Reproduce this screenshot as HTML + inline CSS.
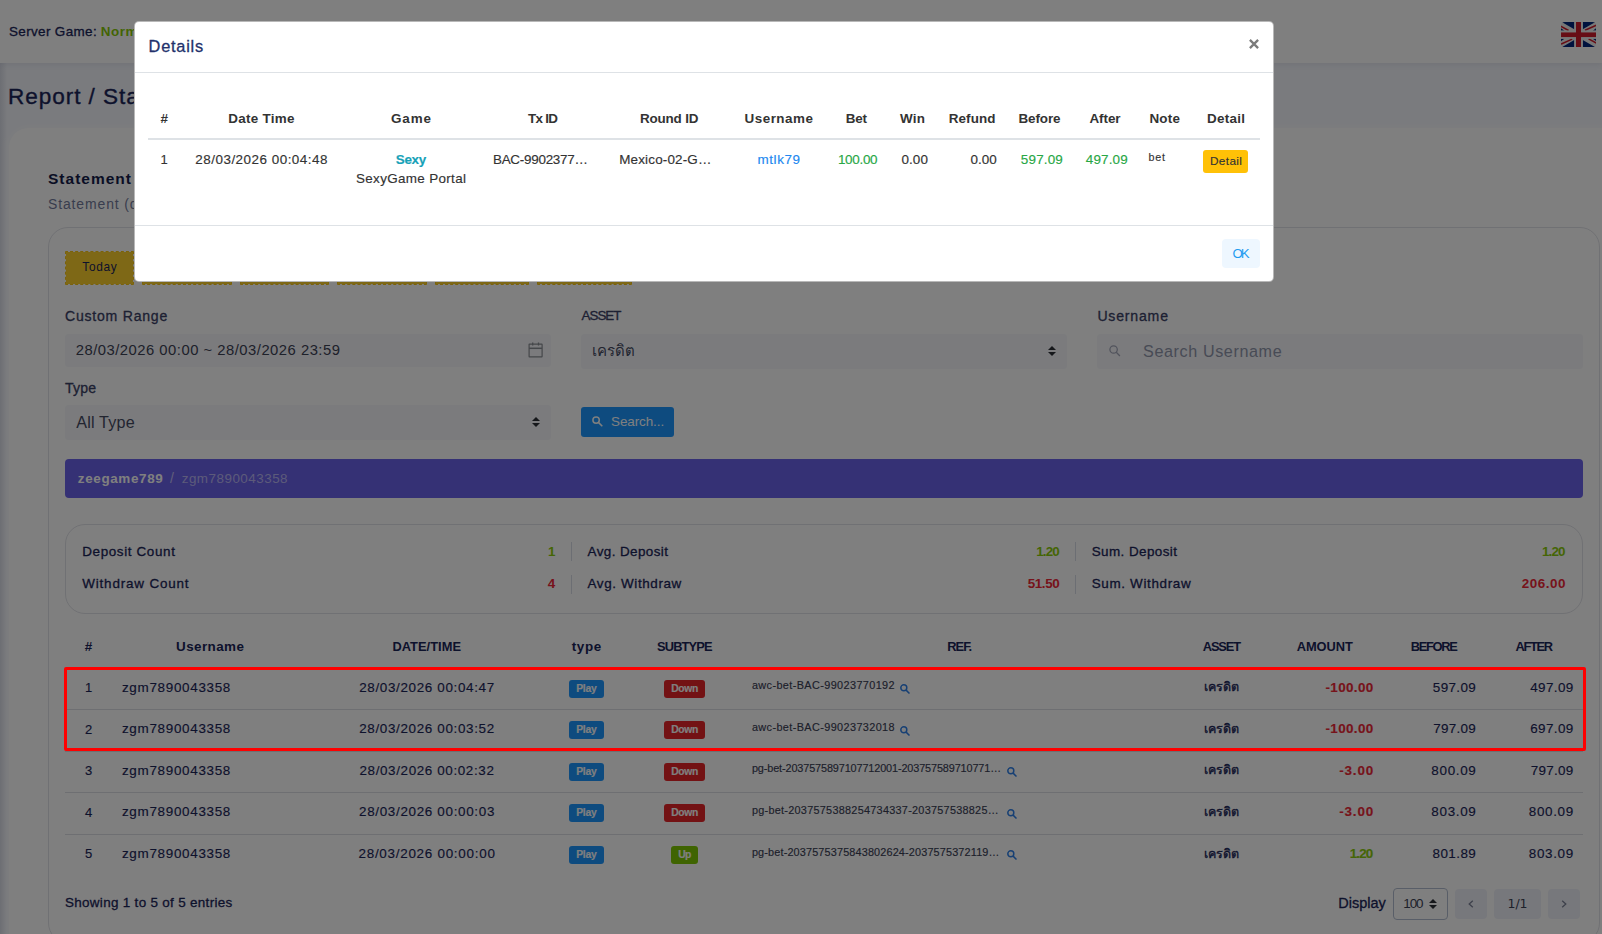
<!DOCTYPE html><html lang="en"><head><meta charset="utf-8"><title>Report / Statement</title><style>
*{box-sizing:border-box}
html,body{margin:0;padding:0}
body{width:1602px;height:934px;overflow:hidden;position:relative;background:#f4f6fc;
 font-family:"Liberation Sans","Noto Sans CJK SC",sans-serif;font-size:13px;line-height:1.5;color:#1b2559}
.abs{position:absolute}
.rb{position:absolute;width:0;height:0}
form{margin:0;padding:0}
.nw{white-space:nowrap}
#topbar{position:absolute;left:0;top:0;width:1602px;height:63px;background:#fff;box-shadow:0 1px 6px rgba(40,50,90,.10)}
#wrap{position:absolute;left:9px;top:128px;width:1640px;height:900px;background:#fff;border-radius:20px 0 0 0;box-shadow:0 0 7px 2px rgba(255,255,255,.55)}
#card{position:absolute;left:48px;top:227px;width:1552px;height:716px;border:1px solid #e1e2e8;border-radius:20px;background:#fff}
.qbtn{position:absolute;top:251px;height:34px;background:#fdd02c;background-clip:padding-box;border:1px dashed #f5c416;border-radius:1px;color:#1b2559;text-align:center;line-height:30px;white-space:nowrap;font-family:inherit;padding:0 0 2px;margin:0}
.lbl{position:absolute;white-space:nowrap;color:#3a4166;line-height:20px}
.inp{position:absolute;background:#f6f7fb;border-radius:3.5px}
.ctl{position:absolute;left:0;top:0;width:100%;height:100%;margin:0;border:0;outline:0;background:transparent;font-family:inherit;padding:0;-webkit-appearance:none;appearance:none;border-radius:3.5px}
.ctl::placeholder{color:#9096ab;opacity:1}
#bar{position:absolute;left:65px;top:459px;width:1518px;height:39px;background:#6a62ea;border-radius:4px;color:#fff;white-space:nowrap;line-height:39px}
#stats{position:absolute;left:65px;top:524px;width:1518px;height:90px;border:1px solid #e1e2e8;border-radius:20px}
#stats .l,#stats .v{position:absolute;white-space:nowrap;line-height:20px}
#stats .v{text-align:right;font-weight:700}
#stats .d{position:absolute;width:1px;height:19px;background:#d9dce6}
.g,#main td.g{color:#8acb0a}.r,#main td.r{color:#ee2737}
table{border-collapse:collapse;table-layout:fixed}
#main{position:absolute;left:65px;top:626px;width:1518px}
#main th{height:42px;padding:0;text-align:center;font-weight:700;color:#1b2559;white-space:nowrap;vertical-align:middle}
#main td{-webkit-text-stroke:.15px;height:41.5px;padding:0 9.75px 2px;border-top:1px solid #dddfe5;white-space:nowrap;vertical-align:middle;color:#1b2559}
#main tr.first td{border-top:1px solid #dcdfe8}
.c{text-align:center}.rt{text-align:right}
.bdg{display:inline-block;height:18px;line-height:18px;border-radius:3px;color:#fff;font-weight:700;font-size:10px;text-align:center;vertical-align:middle}
.play{background:#1c97ff;width:35px}.down{background:#e72428;width:41px}.up{background:#7fc803;width:27px}
.ref{display:inline-block;vertical-align:middle;color:#3a4055;position:relative;top:-3px}
.mag{display:inline-block;vertical-align:middle;position:relative;top:1px;margin-left:5.5px}
#foot{position:absolute;left:65px;top:888px;width:1518px;height:32px;white-space:nowrap}
.pg{position:absolute;top:1px;height:30px;background:#eff1f8;border:0;padding:0;margin:0;font-family:inherit;border-radius:4px;text-align:center;line-height:30px;color:#6b7185}
#overlay{position:absolute;left:0;top:0;width:1602px;height:934px;background:rgba(0,0,0,.5)}
#redbox{position:absolute;left:64px;top:667px;width:1522px;height:84px;border:3px solid #ff0000;border-radius:2px}
#modal{position:absolute;left:134px;top:21px;width:1140px;height:261px;background:#fff;border:1px solid rgba(0,0,0,.28);border-radius:5px;color:#333}
#modal .hd{position:absolute;left:0;top:0;right:0;height:51px;border-bottom:1px solid #dee2e6}
#modal .ft{position:absolute;left:0;right:0;top:203px;bottom:0;border-top:1px solid #dee2e6}
#mt{position:absolute;left:13px;top:78px;width:1112px}
#mt th{height:39px;padding:0;text-align:center;font-weight:700;color:#333;border-bottom:2px solid #dee2e6;white-space:nowrap;vertical-align:middle}
#mt td{-webkit-text-stroke:.15px;padding:9.75px 9.75px;vertical-align:top;white-space:nowrap;color:#333;line-height:19.5px}
.ell{display:inline-block;width:100px;overflow:hidden;text-align:left;vertical-align:top}
</style></head><body>
<header id="topbar">
<div class="abs nw" style="left:9px;top:21.5px;line-height:20px"><span style="font-size:13.45px;letter-spacing:0.362px;margin-right:-0.362px;-webkit-text-stroke:.3px #1b2559;">Server Game:</span> <span style="font-size:13.45px;font-weight:700;letter-spacing:0.572px;margin-right:-0.572px;color:#86c905;margin-left:0.5px;">Normal</span></div>
<svg class="abs" style="left:1560.9px;top:21.7px" width="35.2" height="25.3" viewBox="0 0 35.15 25.3">
<defs><clipPath id="fc"><rect x="0" y="0" width="35.15" height="25.3" rx="3.7" ry="3.7"/></clipPath></defs>
<g clip-path="url(#fc)"><rect width="35.15" height="25.3" fill="#eeeeee"/>
<path fill="#00247d" d="M.7 0H13.25V7.3zM34.45 0H21.73V7.3zM.7 25.3H13.25V18.1zM34.45 25.3H21.73V18.1zM0 6.2V8.66H3.4zM35.15 6.2V8.66H31.75zM0 19.2V16.8H3.4zM35.15 19.2V16.8H31.75z"/>
<path stroke="#cf1b2b" stroke-width="1.55" fill="none" d="M-.6 4.1L7.6 8.45M24 8.2L35.6 3.05M35.75 21.2L27.55 16.85M11.15 17.1L-.45 22.25"/>
<path fill="#cf1b2b" d="M15 0H19.96V10.25H35.15V15.2H19.96V25.3H15V15.2H0V10.25H15z"/>
<path fill="none" stroke="#eeeeee" stroke-width="1.7" d="M14.12 0V9.4H0M21.02 0V9.4H35.15M14.12 25.3V16.0H0M21.02 25.3V16.0H35.15"/>
</g></svg>
</header>
<h1 class="abs nw" style="left:8px;top:78px;margin:0;font-weight:400;line-height:34px;color:#1b2559;-webkit-text-stroke:.35px #1b2559"><span style="font-size:22.56px;letter-spacing:0.950px;margin-right:-0.950px;">Report / Statement</span></h1>
<div class="abs" style="left:0;top:63px;width:7px;height:871px;background:linear-gradient(90deg,rgba(40,48,90,.13),rgba(40,48,90,0))"></div>
<main id="wrap"><div class="rb" style="left:-9px;top:-128px">
<h2 class="abs nw" style="left:48px;top:165px;margin:0;line-height:24px;color:#141c4a"><span style="font-size:15.52px;font-weight:700;letter-spacing:0.996px;margin-right:-0.996px;">Statement</span></h2>
<div class="abs nw" style="left:48px;top:193px;line-height:22px;color:#737b9c"><span style="font-size:13.97px;letter-spacing:0.873px;margin-right:-0.873px;">Statement (detail)</span></div>
<section id="card"><div class="rb" style="left:-49px;top:-228px">
<button type="button" class="qbtn" style="left:65px;width:69px"><span style="font-size:11.9px;letter-spacing:0.636px;margin-right:-0.636px;">Today</span></button>
<button type="button" class="qbtn" style="left:142px;width:90px"><span style="font-size:11.9px;">Yesterday</span></button>
<button type="button" class="qbtn" style="left:240px;width:89px"><span style="font-size:11.9px;">This Week</span></button>
<button type="button" class="qbtn" style="left:337px;width:90px"><span style="font-size:11.9px;">Last Week</span></button>
<button type="button" class="qbtn" style="left:435px;width:94px"><span style="font-size:11.9px;">This Month</span></button>
<button type="button" class="qbtn" style="left:537px;width:95px"><span style="font-size:11.9px;">Last Month</span></button>
<form onsubmit="return false">
<label class="lbl" style="left:65px;top:306px"><span style="font-size:14.08px;letter-spacing:0.762px;margin-right:-0.762px;-webkit-text-stroke:.3px #3a4166;">Custom Range</span></label>
<label class="lbl" style="left:581.5px;top:306px"><span style="font-size:13.35px;letter-spacing:-0.943px;margin-right:0.943px;-webkit-text-stroke:.3px #3a4166;">ASSET</span></label>
<label class="lbl" style="left:1097.4px;top:306px"><span style="font-size:14.08px;letter-spacing:0.807px;margin-right:-0.807px;-webkit-text-stroke:.3px #3a4166;">Username</span></label>
<label class="lbl" style="left:65px;top:378px"><span style="font-size:14.08px;letter-spacing:0.158px;margin-right:-0.158px;-webkit-text-stroke:.3px #3a4166;">Type</span></label>
<div class="inp" style="left:65px;top:334px;width:486px;height:33px"><input class="ctl" type="text" readonly value="28/03/2026 00:00 ~ 28/03/2026 23:59" style="padding:0 0 2px 10.7px;color:#3d4255;font-size:14.8px;letter-spacing:0.500px"><svg class="abs" style="left:462.5px;top:7.5px" width="15" height="16" viewBox="0 0 15 16" fill="none" stroke="#8a8e94" stroke-width="1.2"><rect x="1.1" y="2.1" width="13" height="12.7" rx=".3"/><path d="M1.1 6.3H14.1" stroke-width="1.5"/><path d="M4.7 .6V3.4M10.5 .6V3.4" stroke-width="1.3"/></svg></div>
<div class="inp" style="left:581px;top:334px;width:486px;height:35px"><select class="ctl" style="padding:0 0 2px 11.4px;color:#454a62;font-size:15px"><option selected>เครดิต</option></select><svg class="abs" style="right:11px;top:12px" width="8" height="10" viewBox="0 0 8 10"><path d="M4 0L8 4.1H0zM4 10L0 5.9H8z" fill="#2c3036"/></svg></div>
<div class="inp" style="left:1097px;top:334px;width:486px;height:35px"><svg class="abs" style="left:12px;top:10.5px" width="12" height="12" viewBox="0 0 12 12" fill="none" stroke="#a3a6b8" stroke-width="1.25"><circle cx="4.6" cy="4.5" r="3.7"/><path d="M7.3 7.2L10.9 11"/></svg><input class="ctl" type="text" placeholder="Search Username" style="padding-left:46px;color:#3d4255;font-size:16.15px;letter-spacing:0.610px"></div>
<div class="inp" style="left:65px;top:405px;width:486px;height:35px"><select class="ctl" style="padding:0 0 1px 11.2px;color:#454a62;font-size:16.15px;letter-spacing:0.192px"><option selected>All Type</option></select><svg class="abs" style="right:11px;top:12px" width="8" height="10" viewBox="0 0 8 10"><path d="M4 0L8 4.1H0zM4 10L0 5.9H8z" fill="#2c3036"/></svg></div>
<button class="abs" style="left:581px;top:407px;width:93px;height:30px;border:0;padding:0;background:#1c97ff;border-radius:3px;color:#fff;font-family:inherit;text-align:left"><svg class="abs" style="left:11px;top:9px" width="11" height="11" viewBox="0 0 11 11" fill="none" stroke="#fff" stroke-width="1.5"><circle cx="4.1" cy="4.1" r="3.2"/><path d="M6.6 6.6L10.3 10.3"/></svg><span class="abs nw" style="left:30px;top:0;line-height:29px"><span style="font-size:13.45px;letter-spacing:-0.078px;margin-right:0.078px;">Search...</span></span></button>
</form>
<nav id="bar"><span class="abs" style="left:12.8px;top:0"><span style="font-size:13.45px;font-weight:700;letter-spacing:0.638px;margin-right:-0.638px;">zeegame789</span></span><span class="abs" style="left:105px;top:0;color:rgba(255,255,255,.6);font-size:14px">/</span><span class="abs" style="left:116.7px;top:0;color:rgba(255,255,255,.55)"><span style="font-size:13.45px;letter-spacing:0.482px;margin-right:-0.482px;">zgm7890043358</span></span></nav>
<section id="stats">
<div class="l" style="left:16.200000000000003px;top:16.5px"><span style="font-size:13.45px;letter-spacing:0.631px;margin-right:-0.631px;-webkit-text-stroke:.3px #1b2559;">Deposit Count</span></div>
<div class="v g" style="right:1026.5px;top:16.5px"><span style="font-size:13.45px;font-weight:700;">1</span></div>
<div class="l" style="left:16.200000000000003px;top:48.5px"><span style="font-size:13.45px;letter-spacing:0.832px;margin-right:-0.832px;-webkit-text-stroke:.3px #1b2559;">Withdraw Count</span></div>
<div class="v r" style="right:1026.7px;top:48.5px"><span style="font-size:13.45px;font-weight:700;">4</span></div>
<div class="l" style="left:521.5px;top:16.5px"><span style="font-size:13.45px;letter-spacing:0.408px;margin-right:-0.408px;-webkit-text-stroke:.3px #1b2559;">Avg. Deposit</span></div>
<div class="v g" style="right:522.3px;top:16.5px"><span style="font-size:13.45px;font-weight:700;letter-spacing:-0.893px;margin-right:0.893px;">1.20</span></div>
<div class="l" style="left:521.5px;top:48.5px"><span style="font-size:13.45px;letter-spacing:0.620px;margin-right:-0.620px;-webkit-text-stroke:.3px #1b2559;">Avg. Withdraw</span></div>
<div class="v r" style="right:522.3px;top:48.5px"><span style="font-size:13.45px;font-weight:700;letter-spacing:-0.414px;margin-right:0.414px;">51.50</span></div>
<div class="l" style="left:1025.7px;top:16.5px"><span style="font-size:13.45px;letter-spacing:0.424px;margin-right:-0.424px;-webkit-text-stroke:.3px #1b2559;">Sum. Deposit</span></div>
<div class="v g" style="right:16.5px;top:16.5px"><span style="font-size:13.45px;font-weight:700;letter-spacing:-0.893px;margin-right:0.893px;">1.20</span></div>
<div class="l" style="left:1025.7px;top:48.5px"><span style="font-size:13.45px;letter-spacing:0.660px;margin-right:-0.660px;-webkit-text-stroke:.3px #1b2559;">Sum. Withdraw</span></div>
<div class="v r" style="right:16.5px;top:48.5px"><span style="font-size:13.45px;font-weight:700;letter-spacing:0.512px;margin-right:-0.512px;">206.00</span></div>
<div class="d" style="left:505px;top:17px"></div>
<div class="d" style="left:505px;top:49.5px"></div>
<div class="d" style="left:1009px;top:17px"></div>
<div class="d" style="left:1009px;top:49.5px"></div>
</section>
<table id="main"><colgroup><col style="width:47.2px"><col style="width:195.6px"><col style="width:237.8px"><col style="width:81.8px"><col style="width:114.8px"><col style="width:435.0px"><col style="width:89.4px"><col style="width:116.4px"><col style="width:102.6px"><col style="width:97.4px"></colgroup>
<thead><tr><th><span style="font-size:13.45px;font-weight:700;">#</span></th><th><span style="font-size:13.45px;font-weight:700;letter-spacing:0.408px;margin-right:-0.408px;">Username</span></th><th><span style="font-size:12.83px;font-weight:700;letter-spacing:0.052px;margin-right:-0.052px;">DATE/TIME</span></th><th><span style="font-size:13.45px;font-weight:700;letter-spacing:0.648px;margin-right:-0.648px;">type</span></th><th><span style="font-size:12.83px;font-weight:700;letter-spacing:-0.866px;margin-right:0.866px;">SUBTYPE</span></th><th><span style="font-size:12.83px;font-weight:700;letter-spacing:-0.934px;margin-right:0.934px;">REF.</span></th><th><span style="font-size:12.83px;font-weight:700;letter-spacing:-1.119px;margin-right:1.119px;">ASSET</span></th><th><span style="font-size:12.83px;font-weight:700;letter-spacing:-0.060px;margin-right:0.060px;">AMOUNT</span></th><th><span style="font-size:12.83px;font-weight:700;letter-spacing:-1.273px;margin-right:1.273px;">BEFORE</span></th><th><span style="font-size:12.83px;font-weight:700;letter-spacing:-1.291px;margin-right:1.291px;">AFTER</span></th></tr></thead><tbody>
<tr><td class="c">1</td><td><span style="font-size:13.45px;letter-spacing:0.691px;margin-right:-0.691px;">zgm7890043358</span></td><td class="c"><span style="font-size:13.45px;letter-spacing:0.650px;margin-right:-0.650px;">28/03/2026 00:04:47</span></td><td class="c"><span class="bdg play"><span style="font-size:10.35px;font-weight:700;letter-spacing:-0.197px;margin-right:0.197px;">Play</span></span></td><td class="c"><span class="bdg down"><span style="font-size:10.35px;font-weight:700;letter-spacing:-0.290px;margin-right:0.290px;">Down</span></span></td><td><span class="ref"><span style="font-size:10.87px;letter-spacing:0.393px;margin-right:-0.393px;">awc-bet-BAC-99023770192</span></span><svg class="mag" width="10" height="10" viewBox="0 0 10 10" fill="none" stroke="#2f80e8" stroke-width="1.5"><circle cx="3.8" cy="3.8" r="3"/><path d="M6.1 6.1L9.5 9.5"/></svg></td><td class="c" style="font-size:12.5px;-webkit-text-stroke:.35px #1b2559">เครดิต</td><td class="rt r"><span style="font-size:13.45px;font-weight:700;letter-spacing:0.347px;margin-right:-0.347px;">-100.00</span></td><td class="rt"><span style="font-size:13.45px;letter-spacing:0.372px;margin-right:-0.372px;">597.09</span></td><td class="rt"><span style="font-size:13.45px;letter-spacing:0.372px;margin-right:-0.372px;">497.09</span></td></tr>
<tr><td class="c">2</td><td><span style="font-size:13.45px;letter-spacing:0.691px;margin-right:-0.691px;">zgm7890043358</span></td><td class="c"><span style="font-size:13.45px;letter-spacing:0.650px;margin-right:-0.650px;">28/03/2026 00:03:52</span></td><td class="c"><span class="bdg play"><span style="font-size:10.35px;font-weight:700;letter-spacing:-0.197px;margin-right:0.197px;">Play</span></span></td><td class="c"><span class="bdg down"><span style="font-size:10.35px;font-weight:700;letter-spacing:-0.290px;margin-right:0.290px;">Down</span></span></td><td><span class="ref"><span style="font-size:10.87px;letter-spacing:0.393px;margin-right:-0.393px;">awc-bet-BAC-99023732018</span></span><svg class="mag" width="10" height="10" viewBox="0 0 10 10" fill="none" stroke="#2f80e8" stroke-width="1.5"><circle cx="3.8" cy="3.8" r="3"/><path d="M6.1 6.1L9.5 9.5"/></svg></td><td class="c" style="font-size:12.5px;-webkit-text-stroke:.35px #1b2559">เครดิต</td><td class="rt r"><span style="font-size:13.45px;font-weight:700;letter-spacing:0.347px;margin-right:-0.347px;">-100.00</span></td><td class="rt"><span style="font-size:13.45px;letter-spacing:0.272px;margin-right:-0.272px;">797.09</span></td><td class="rt"><span style="font-size:13.45px;letter-spacing:0.372px;margin-right:-0.372px;">697.09</span></td></tr>
<tr><td class="c">3</td><td><span style="font-size:13.45px;letter-spacing:0.691px;margin-right:-0.691px;">zgm7890043358</span></td><td class="c"><span style="font-size:13.45px;letter-spacing:0.616px;margin-right:-0.616px;">28/03/2026 00:02:32</span></td><td class="c"><span class="bdg play"><span style="font-size:10.35px;font-weight:700;letter-spacing:-0.197px;margin-right:0.197px;">Play</span></span></td><td class="c"><span class="bdg down"><span style="font-size:10.35px;font-weight:700;letter-spacing:-0.290px;margin-right:0.290px;">Down</span></span></td><td><span class="ref" style="width:250px"><span style="font-size:10.87px;letter-spacing:-0.121px;margin-right:0.121px;">pg-bet-2037575897107712001-203757589710771…</span></span><svg class="mag" width="10" height="10" viewBox="0 0 10 10" fill="none" stroke="#2f80e8" stroke-width="1.5"><circle cx="3.8" cy="3.8" r="3"/><path d="M6.1 6.1L9.5 9.5"/></svg></td><td class="c" style="font-size:12.5px;-webkit-text-stroke:.35px #1b2559">เครดิต</td><td class="rt r"><span style="font-size:13.45px;font-weight:700;letter-spacing:0.836px;margin-right:-0.836px;">-3.00</span></td><td class="rt"><span style="font-size:13.45px;letter-spacing:0.672px;margin-right:-0.672px;">800.09</span></td><td class="rt"><span style="font-size:13.45px;letter-spacing:0.272px;margin-right:-0.272px;">797.09</span></td></tr>
<tr><td class="c">4</td><td><span style="font-size:13.45px;letter-spacing:0.691px;margin-right:-0.691px;">zgm7890043358</span></td><td class="c"><span style="font-size:13.45px;letter-spacing:0.672px;margin-right:-0.672px;">28/03/2026 00:00:03</span></td><td class="c"><span class="bdg play"><span style="font-size:10.35px;font-weight:700;letter-spacing:-0.197px;margin-right:0.197px;">Play</span></span></td><td class="c"><span class="bdg down"><span style="font-size:10.35px;font-weight:700;letter-spacing:-0.290px;margin-right:0.290px;">Down</span></span></td><td><span class="ref" style="width:250px"><span style="font-size:10.87px;letter-spacing:0.271px;margin-right:-0.271px;">pg-bet-2037575388254734337-203757538825…</span></span><svg class="mag" width="10" height="10" viewBox="0 0 10 10" fill="none" stroke="#2f80e8" stroke-width="1.5"><circle cx="3.8" cy="3.8" r="3"/><path d="M6.1 6.1L9.5 9.5"/></svg></td><td class="c" style="font-size:12.5px;-webkit-text-stroke:.35px #1b2559">เครดิต</td><td class="rt r"><span style="font-size:13.45px;font-weight:700;letter-spacing:0.836px;margin-right:-0.836px;">-3.00</span></td><td class="rt"><span style="font-size:13.45px;letter-spacing:0.672px;margin-right:-0.672px;">803.09</span></td><td class="rt"><span style="font-size:13.45px;letter-spacing:0.672px;margin-right:-0.672px;">800.09</span></td></tr>
<tr><td class="c">5</td><td><span style="font-size:13.45px;letter-spacing:0.691px;margin-right:-0.691px;">zgm7890043358</span></td><td class="c"><span style="font-size:13.45px;letter-spacing:0.727px;margin-right:-0.727px;">28/03/2026 00:00:00</span></td><td class="c"><span class="bdg play"><span style="font-size:10.35px;font-weight:700;letter-spacing:-0.197px;margin-right:0.197px;">Play</span></span></td><td class="c"><span class="bdg up"><span style="font-size:10.35px;font-weight:700;letter-spacing:-0.597px;margin-right:0.597px;">Up</span></span></td><td><span class="ref" style="width:250px"><span style="font-size:10.87px;letter-spacing:0.153px;margin-right:-0.153px;">pg-bet-2037575375843802624-2037575372119…</span></span><svg class="mag" width="10" height="10" viewBox="0 0 10 10" fill="none" stroke="#2f80e8" stroke-width="1.5"><circle cx="3.8" cy="3.8" r="3"/><path d="M6.1 6.1L9.5 9.5"/></svg></td><td class="c" style="font-size:12.5px;-webkit-text-stroke:.35px #1b2559">เครดิต</td><td class="rt g"><span style="font-size:13.45px;font-weight:700;letter-spacing:-0.893px;margin-right:0.893px;">1.20</span></td><td class="rt"><span style="font-size:13.45px;letter-spacing:0.432px;margin-right:-0.432px;">801.89</span></td><td class="rt"><span style="font-size:13.45px;letter-spacing:0.672px;margin-right:-0.672px;">803.09</span></td></tr>
</tbody></table>
<footer id="foot">
<div class="abs nw" style="left:0;top:5px;line-height:20px"><span style="font-size:13.45px;letter-spacing:0.313px;margin-right:-0.313px;-webkit-text-stroke:.3px #1b2559;">Showing 1 to 5 of 5 entries</span></div>
<div class="abs nw" style="left:1273.3px;top:4px;line-height:22px"><span style="font-size:14.49px;letter-spacing:-0.002px;margin-right:0.002px;-webkit-text-stroke:.3px #1b2559;">Display</span></div>
<div class="abs" style="left:1328px;top:0;width:55px;height:32px;border:1px solid #b3bdd0;border-radius:4px"><select class="ctl" style="padding:0 0 1px 9.3px;color:#3d4255;font-size:13.45px;letter-spacing:-1.120px"><option selected>100</option></select><svg class="abs" style="left:35px;top:9.5px" width="8" height="10" viewBox="0 0 8 10"><path d="M4 0L8 4.1H0zM4 10L0 5.9H8z" fill="#2c3036"/></svg></div>
<button type="button" class="pg" style="left:1390px;width:32px"><svg class="abs" style="left:13px;top:10.5px" width="6" height="8" viewBox="0 0 6 8" fill="none" stroke="#7a8096" stroke-width="1.3"><path d="M4.8 .7L1.2 4L4.8 7.3"/></svg></button>
<button type="button" class="pg" style="left:1429px;width:47px;color:#3d4255"><span style="font-family:'DejaVu Sans','Liberation Sans',sans-serif;font-size:12.5px">1/1</span></button>
<button type="button" class="pg" style="left:1483px;width:32px"><svg class="abs" style="left:13px;top:10.5px" width="6" height="8" viewBox="0 0 6 8" fill="none" stroke="#7a8096" stroke-width="1.3"><path d="M1.2 .7L4.8 4L1.2 7.3"/></svg></button>
</footer>
</div></section></div></main>
<div id="overlay"></div>
<div id="redbox"></div>
<div id="modal" role="dialog">
<div class="hd"><h5 class="abs nw" style="left:13.6px;top:10.6px;margin:0;font-weight:400;line-height:26px;color:#22316b;-webkit-text-stroke:.3px #22316b"><span style="font-size:16.35px;letter-spacing:0.771px;margin-right:-0.771px;">Details</span></h5><svg class="abs" style="left:1113.5px;top:17px" width="10" height="10" viewBox="0 0 10 10" stroke="#7b7b7b" stroke-width="2.3" fill="none"><path d="M.9 .9L9.1 9.1M9.1 .9L.9 9.1"/></svg></div>
<table id="mt"><colgroup><col style="width:32.3px"><col style="width:162.2px"><col style="width:137.0px"><col style="width:127.0px"><col style="width:125.5px"><col style="width:93.5px"><col style="width:61.8px"><col style="width:50.4px"><col style="width:68.8px"><col style="width:66.1px"><col style="width:64.9px"><col style="width:54.5px"><col style="width:68.0px"></colgroup>
<thead><tr><th><span style="font-size:13.45px;font-weight:700;">#</span></th><th><span style="font-size:13.45px;font-weight:700;letter-spacing:0.295px;margin-right:-0.295px;">Date Time</span></th><th><span style="font-size:13.45px;font-weight:700;letter-spacing:0.806px;margin-right:-0.806px;">Game</span></th><th><span style="font-size:13.45px;font-weight:700;letter-spacing:-0.721px;margin-right:0.721px;">Tx ID</span></th><th><span style="font-size:13.45px;font-weight:700;letter-spacing:-0.180px;margin-right:0.180px;">Round ID</span></th><th><span style="font-size:13.45px;font-weight:700;letter-spacing:0.494px;margin-right:-0.494px;">Username</span></th><th><span style="font-size:13.45px;font-weight:700;letter-spacing:-0.186px;margin-right:0.186px;">Bet</span></th><th><span style="font-size:13.45px;font-weight:700;letter-spacing:0.235px;margin-right:-0.235px;">Win</span></th><th><span style="font-size:13.45px;font-weight:700;letter-spacing:0.096px;margin-right:-0.096px;">Refund</span></th><th><span style="font-size:13.45px;font-weight:700;letter-spacing:-0.121px;margin-right:0.121px;">Before</span></th><th><span style="font-size:13.45px;font-weight:700;letter-spacing:-0.096px;margin-right:0.096px;">After</span></th><th><span style="font-size:13.45px;font-weight:700;letter-spacing:0.204px;margin-right:-0.204px;">Note</span></th><th><span style="font-size:13.45px;font-weight:700;letter-spacing:0.275px;margin-right:-0.275px;">Detail</span></th></tr></thead><tbody><tr>
<td class="c">1</td>
<td class="c"><span style="font-size:13.45px;letter-spacing:0.494px;margin-right:-0.494px;">28/03/2026 00:04:48</span></td>
<td class="c"><span style="font-size:13.45px;font-weight:700;letter-spacing:-0.304px;margin-right:0.304px;color:#17a2b8;">Sexy</span><br><span style="font-size:13.45px;letter-spacing:0.329px;margin-right:-0.329px;">SexyGame Portal</span></td>
<td class="c"><span class="ell"><span style="font-size:13.45px;letter-spacing:-0.268px;margin-right:0.268px;">BAC-9902377…</span></span></td>
<td class="c"><span class="ell"><span style="font-size:13.45px;letter-spacing:0.161px;margin-right:-0.161px;">Mexico-02-G…</span></span></td>
<td class="c"><span style="font-size:13.45px;letter-spacing:0.577px;margin-right:-0.577px;color:#2188f0;">mtlk79</span></td>
<td class="rt" style="color:#28a745"><span style="font-size:13.45px;letter-spacing:-0.288px;margin-right:0.288px;">100.00</span></td>
<td class="rt"><span style="font-size:13.45px;letter-spacing:0.107px;margin-right:-0.107px;">0.00</span></td>
<td class="rt"><span style="font-size:13.45px;letter-spacing:0.041px;margin-right:-0.041px;">0.00</span></td>
<td class="rt" style="color:#28a745"><span style="font-size:13.45px;letter-spacing:0.172px;margin-right:-0.172px;">597.09</span></td>
<td class="rt" style="color:#28a745"><span style="font-size:13.45px;letter-spacing:0.172px;margin-right:-0.172px;">497.09</span></td>
<td style="padding-top:7px;padding-left:11px"><small style="font-size:10.4px"><span style="font-size:10.76px;letter-spacing:0.771px;margin-right:-0.771px;">bet</span></small></td>
<td class="c" style="padding-top:10px"><span style="display:inline-block;width:45px;height:22.5px;line-height:22px;background:#ffc107;border-radius:3px;color:#333;text-align:center"><span style="font-size:11.8px;letter-spacing:0.366px;margin-right:-0.366px;">Detail</span></span></td>
</tr></tbody></table>
<div class="ft"><button class="abs" style="left:1087px;top:13px;width:38px;height:29px;border:0;padding:0;background:#eef7ff;border-radius:4px;color:#1f9cf0;font-family:inherit;line-height:29px;text-align:center"><span style="font-size:13.25px;letter-spacing:-1.944px;margin-right:1.944px;">OK</span></button></div>
</div>
</body></html>
